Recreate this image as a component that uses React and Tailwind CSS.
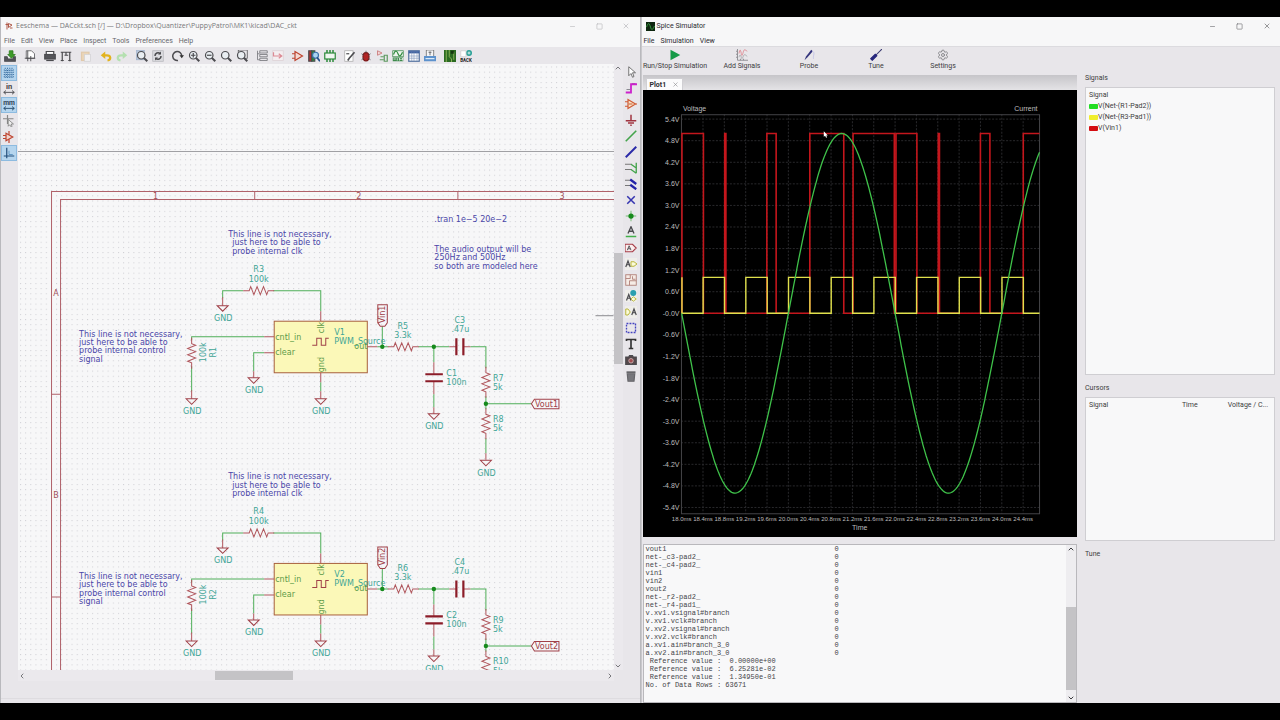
import { Minus, Square, X, Settings, ChevronUp, ChevronDown, ChevronLeft, ChevronRight } from 'lucide-react'

const WIRE = '#4fae58'
const PIN = '#b0565c'
const BODY = '#a04048'
const FIELD = '#3fa596'
const NOTE = '#4a46a8'

function Icon({ children }) {
  return (
    <svg viewBox="0 0 16 16" className="h-3 w-3 shrink-0" fill="none" stroke="#4b4b4f" strokeWidth="1.6">
      {children}
    </svg>
  )
}

const lens = (
  <>
    <circle cx="7" cy="7" r="5" fill="#e9eef2" />
    <path d="M10.5 10.5L15 15" strokeWidth="2.8" />
  </>
)

const topGroups = [
  [['Save', <><path d="M1 9h3l1 3h7l1-3h2v6H1z" fill="#55555a" /><path d="M7 1h5v5h3l-5 5-5-5h2z" fill="#3d9a28" stroke="#2c7a1c" strokeWidth="1" /></>]],
  [['Page settings', <><path d="M3 1h7l4 4v6H3z" fill="#fff" strokeWidth="1" /><path d="M5 1v14M1 11h14M9 8v7" strokeWidth="1.2" /></>]],
  [
    ['Print', <><path d="M3 6V2h10v4" fill="#fff" /><rect x="1" y="6" width="14" height="6" fill="#55555a" /><path d="M3 14h10" /></>],
    ['Plot', <><path d="M1 3h14M3 3v12M13 3v12M6 7h5M8 3v4" /><path d="M1 14h4M11 14h4" /></>],
  ],
  [['Paste', <g opacity=".45"><rect x="2" y="3" width="10" height="11" fill="#eec27c" stroke="#d9a861" /><rect x="6" y="6" width="8" height="9" fill="#fff" stroke="#bbb" strokeWidth="1" /></g>]],
  [
    ['Undo', <><path d="M5 7h4c6 0 6 6 1 7" stroke="#e2b31f" strokeWidth="3" /><path d="M7 2v10L1 7z" fill="#e2b31f" stroke="none" /></>],
    ['Redo', <><path d="M11 7H7c-6 0-6 6-1 7" stroke="#b4e0b0" strokeWidth="3" /><path d="M9 2v10l6-5z" fill="#b4e0b0" stroke="none" /></>],
  ],
  [
    ['Find', <><rect x="0" y="0" width="11" height="13" fill="#b8c7dc" stroke="#9fb0c8" strokeWidth="1" />{lens}</>],
    ['Find and replace', <><rect x="1" y="1" width="14" height="14" fill="#dcdce0" stroke="#b5b5bb" strokeWidth="1" /><path d="M4 8a4 4 0 0 1 7-3M12 8a4 4 0 0 1-7 3" strokeWidth="2" /><path d="M12 2v4H8zM4 14v-4h4z" fill="#4b4b4f" stroke="none" /></>],
  ],
  [
    ['Refresh', <><path d="M8 14a6 6 0 1 1 5-6" strokeWidth="2" /><path d="M10 7h6l-3 4z" fill="#333" stroke="none" /></>],
    ['Zoom in', <>{lens}<path d="M4 7h6M7 4v6" /></>],
    ['Zoom out', <>{lens}<path d="M4 7h6" /></>],
    ['Zoom to fit', lens],
    ['Zoom to selection', <><rect x="3" y="0" width="12" height="11" strokeWidth="1" />{lens}</>],
  ],
  [
    ['Hierarchy', <path d="M2 1v12h3M2 5h3M5 1h10v3H5zM5 6h10v3H5zM5 11h10v3H5z" strokeWidth="1.1" stroke="#77777c" />],
    ['Leave sheet', <><rect x="1" y="1" width="14" height="13" fill="#f4eef0" stroke="#dccfd4" strokeWidth="1" /><path d="M2 3v5h10M9 5l4 3-4 3" stroke="#dc8a94" /></>],
  ],
  [
    ['Symbol editor', <><path d="M4 2v12l10-6z" fill="#f4d9d2" stroke="#bd4430" /><path d="M0 5h4M0 11h4" stroke="#bd4430" /></>],
    ['Browse libraries', <><path d="M1 1h4v14H1z" fill="#b03030" /><path d="M5 1h4v14H5z" fill="#2c8a3c" /><circle cx="10" cy="7" r="4" fill="#a9d3ef" stroke="#3b6fa8" /><path d="M12 10l4 5" strokeWidth="2.4" stroke="#234f8a" /></>],
    ['Footprint editor', <><rect x="1" y="4" width="14" height="8" fill="#f0f6f0" stroke="#2d8a3b" /><path d="M4 0v4M8 0v4M12 0v4M4 12v4M8 12v4M12 12v4" stroke="#2d8a3b" strokeWidth="2" /></>],
  ],
  [
    ['Annotate', <><rect x="1" y="1" width="11" height="14" fill="#fff" stroke="#aaa" strokeWidth="1" /><path d="M14 3l-7 8-2 3" strokeWidth="2.2" /><path d="M3 5h4" /></>],
    ['Electrical rules', <><ellipse cx="8" cy="9" rx="4" ry="5.5" fill="#b02525" stroke="#7d1818" /><path d="M8 1v3M2 5l3 2M14 5l-3 2M2 13l3-2M14 13l-3-2" strokeWidth="1" /></>],
    ['Assign footprints', <><path d="M2 1v6l6-3z" fill="#f2d5d5" stroke="#c46b6b" strokeWidth="1" /><path d="M6 9h4M12 7h3v8h-4V7h1M5 13h5" stroke="#5d9a60" /></>],
    ['Simulator', <><rect x="1" y="1" width="14" height="8" fill="#eef4ee" stroke="#3e8a4c" strokeWidth="1" /><path d="M2 6c2-6 4-6 6-1s4 3 6-2" stroke="#2d8a3b" /><path d="M1 10h14v5H1z" fill="#3e8a4c" stroke="none" /><path d="M2 12h3M7 11v3M10 14v-3l2 2 2-2v3" stroke="#fff" strokeWidth="1" /></>],
    ['Symbol fields', <><rect x="1" y="1" width="14" height="14" fill="#fff" stroke="#51709e" /><path d="M1 3h14" stroke="#3f62a0" strokeWidth="3" /><path d="M1 8h14M1 11h14M5 3v12M8 3v12M12 3v12" stroke="#7d93b8" strokeWidth=".8" /></>],
    ['Bill of materials', <><rect x="3" y="0" width="10" height="9" fill="#f5f5f7" stroke="#666" strokeWidth="1" /><path d="M8 2v5M6 3h4" strokeWidth="1" /><rect x="0" y="8" width="16" height="7" fill="#5d92cd" stroke="none" /><path d="M2 11.5h12" stroke="#dbe9f7" /></>],
  ],
  [
    ['Board editor', <><rect x="0" y="0" width="16" height="16" fill="#2c6b22" stroke="none" /><path d="M3 0v16M7 0v9l3 3v4M13 3v10" stroke="#93b85c" strokeWidth="1.2" /><rect x="9" y="1" width="4" height="4" fill="#16380f" stroke="none" /></>],
    ['Back import', <><circle cx="12" cy="4" r="4" fill="#2aa197" stroke="none" /><path d="M12 2v4M10 4h4" stroke="#fff" strokeWidth="1" /><path d="M1 1h7v8H1z" fill="#fff" stroke="#ccc" strokeWidth="1" /><text x="8" y="16" textAnchor="middle" fontSize="6" fontWeight="700" fontFamily="Roboto, sans-serif" fill="#222" stroke="none">BACK</text></>],
  ],
]

const leftTools = [
  ['Grid', true, <path d="M3 1v14M6 1v14M9 1v14M12 1v14M1 4h14M1 7h14M1 10h14M1 13h14" stroke="#33699c" strokeDasharray="1.5 1.5" strokeWidth="1.3" />],
  ['Inches', false, <><text x="8" y="8" textAnchor="middle" fontSize="10" fontWeight="700" fontFamily="Roboto, sans-serif" fill="#444" stroke="none">in</text><path d="M1 12.5h14M4 10l-3 2.5 3 2.5M12 10l3 2.5-3 2.5" strokeWidth="1.2" /></>],
  ['Millimeters', true, <><text x="8" y="8" textAnchor="middle" fontSize="9" fontWeight="700" fontFamily="Roboto, sans-serif" fill="#345" stroke="none">mm</text><path d="M1 12.5h14M4 10l-3 2.5 3 2.5M12 10l3 2.5-3 2.5" stroke="#24496b" strokeWidth="1.2" /></>],
  ['Full cursor', false, <><path d="M6 0v12M0 5h14" stroke="#888" /><path d="M7 6v9l2-2 2 3 1-1-1-3h3z" fill="#eee" stroke="#777" strokeWidth="1" /></>],
  ['Hidden pins', false, <><path d="M4 3v10l9-5z" fill="#f2d3cc" stroke="#bd4430" /><path d="M0 6h4M0 10h4M8 0v5M8 11v5" stroke="#bd4430" /></>],
  ['Free angle wires', true, <><path d="M5 1v14M1 12h14" stroke="#234f7a" /><path d="M8 5v5h5" stroke="#4a86b8" strokeWidth="1" /></>],
]

const rightTools = [
  ['Select', <path d="M5 1v12l3-3 2 5 2-1-2-5h4z" fill="#fff" stroke="#666" strokeWidth="1.2" />],
  ['Highlight net', <><path d="M9 2h5M2 10h5" stroke="#8a8a90" /><path d="M1 14h7V3h8" stroke="#cc22cc" strokeWidth="2.4" /></>],
  ['Place symbol', <><path d="M4 2v12l10-6z" fill="#f7e3c5" stroke="#cf5a34" /><path d="M0 5h4M0 11h4M5 8h5M14 8h2" stroke="#cf5a34" /></>],
  ['Place power', <path d="M8 1v8M1 9h14M4 12h8M7 15h2" stroke="#a03440" strokeWidth="2" />],
  ['Wire', <path d="M1 15L15 1" stroke="#44a44c" strokeWidth="2.2" />],
  ['Bus', <path d="M1 15L15 1" stroke="#2a2aa8" strokeWidth="2.6" />],
  ['Wire entry', <><path d="M0 3h9M0 10h9" stroke="#777" /><path d="M8 3l7 5M8 10l7 5M15 1v14" stroke="#44a44c" strokeWidth="1.8" /></>],
  ['Bus entry', <><path d="M0 3h8M0 10h8" stroke="#777" /><path d="M7 2l8 6M7 9l8 6" stroke="#2424a8" strokeWidth="3" /></>],
  ['No connect', <path d="M3 3l10 10M13 3L3 13" stroke="#3434b0" strokeWidth="2" />],
  ['Junction', <><path d="M8 1v14M1 8h14" stroke="#6cb86c" strokeWidth="1.2" /><circle cx="8" cy="8" r="3.5" fill="#178a1c" stroke="none" /></>],
  ['Net label', <><path d="M4 10L8 1l4 9M5.5 7h5" strokeWidth="1.8" /><path d="M1 14h14" stroke="#44b04c" strokeWidth="2" /></>],
  ['Global label', <><path d="M0 3h10l5 5-5 5H0z" fill="#fbeeee" stroke="#a63c48" /><path d="M3 11l2.5-6L8 11M4 9h3" strokeWidth="1.2" /></>],
  ['Hierarchical label', <><rect width="16" height="16" fill="#efeeea" stroke="none" /><path d="M1 12l3-8 3 8M2 9h4" /><path d="M8 5h4l4 3-4 3H8z" fill="#fbfbd8" stroke="#b8b43a" strokeWidth="1.3" /></>],
  ['Add sheet', <><rect x="1" y="1" width="14" height="14" fill="#f6ece6" stroke="#b08078" strokeWidth="1.2" /><path d="M1 6h6V1M6 15V9h9M10 3v4h4" stroke="#b08078" strokeWidth="1.2" /></>],
  ['Import sheet pin', <><rect width="16" height="16" fill="#efeeea" stroke="none" /><circle cx="11" cy="4" r="4" fill="#2a9fb0" stroke="none" /><path d="M2 14l3-8 3 8M3 11h4" /><path d="M8 12l3-3 4 3-4 3z" fill="#fbfbd8" stroke="#b8b43a" strokeWidth="1.2" /></>],
  ['Sheet pin', <><rect width="16" height="16" fill="#efeeea" stroke="none" /><path d="M1 4h3l3 4-3 4H1z" fill="#fbfbd8" stroke="#b8b43a" strokeWidth="1.3" /><path d="M9 12l3-8 3 8M10 9h4" /></>],
  ['Graphic lines', <rect x="2" y="2" width="12" height="12" stroke="#4444c0" strokeDasharray="2.5 1.5" strokeWidth="1.8" />],
  ['Text', <path d="M2 4V2h12v2M8 2v12M5 14h6" stroke="#333" strokeWidth="2.2" />],
  ['Image', <><path d="M1 4h4l1-2h4l1 2h4v10H1z" fill="#55474a" /><circle cx="8" cy="9" r="3" fill="#a04c50" stroke="#cfc0c0" strokeWidth="1" /></>],
  ['Delete', <><path d="M3 5l1 10h8l1-10z" fill="#77777c" stroke="#66666a" /><path d="M2 3h12" stroke="#66666a" strokeWidth="2.5" /></>],
]

function WindowButtons({ className }) {
  const btn = 'flex h-full w-[27px] items-center justify-center'
  return (
    <div className={`ml-auto flex h-full ${className}`}>
      <button aria-label="Minimize" className={btn}><Minus size={7} /></button>
      <button aria-label="Maximize" className={btn}><Square size={7} /></button>
      <button aria-label="Close" className={btn}><X size={8} /></button>
    </div>
  )
}

function Gnd({ x, y }) {
  return (
    <>
      <path d={`M${x - 5.5} ${y}h11l-5.5 5.5z`} stroke={BODY} fill="none" />
      <text x={x + 0.5} y={y + 15.5} textAnchor="middle" fill={FIELD}>GND</text>
    </>
  )
}

// zig-zag resistor centred on x,y
function Resistor({ x, y, vertical }) {
  return (
    <path
      transform={`translate(${x} ${y})${vertical ? ' rotate(90)' : ''}`}
      d="M-15.5 0h6l1.5-4 3.2 8 3.2-8 3.2 8 3.2-8 3.2 8 1.5-4h6"
      stroke={PIN}
      fill="none"
    />
  )
}

// a leading ">" indents the line
function Lines({ x, y, lines }) {
  return lines.map((l, i) => (
    <text key={i} x={x + (l[0] === '>' ? 4 : 0)} y={y + i * 8.3} fill={NOTE}>{l.replace('>', '')}</text>
  ))
}

function Channel({ dy, names }) {
  const { r1, rclk, v, vin, rs, cs, cp, ra, rb, vout } = names
  return (
    <g transform={`translate(0 ${dy})`}>
      <Lines x={228} y={237} lines={['This line is not necessary,', '>just here to be able to', '>probe internal clk']} />
      <Lines x={79} y={336.5} lines={['This line is not necessary,', 'just here to be able to', 'probe internal control', 'signal']} />

      <g fill="none" stroke={WIRE}>
        <path d="M243 290.5H222.5V298M273 290.5H320.5V311" />
        <path d="M264 336.5H191.5V340M191.5 366V391" />
        <path d="M264 352.5H253.5V371M320.5 382V391" />
        <path d="M377 346.5H388M418 346.5H449M382 346.5V326" />
        <path d="M433.5 346.5V362M433.5 394V407M470 346.5H485.5V368M485.5 396V409M485.5 438V453M485.5 403.5H531" />
      </g>
      <g fill="none" stroke={PIN}>
        <path d="M222.5 297V305.5M320.5 311V321M191.5 390V398.5M253.5 371V377.5M320.5 372V382M320.5 391V398.5" />
        <path d="M264 336.5h10M264 352.5h10M367 346.5h10M449 346.5h7M463 346.5h7" />
        <path d="M433.5 362v12M433.5 381v13M433.5 407v6.5M485.5 453v6.5" />
      </g>

      <rect x="274" y="321" width="93" height="51.5" fill="#fbf8b8" stroke="#a8603c" />
      <path d="M312 345h4.5v-7h4.500v7h4.500v-7h3" fill="none" stroke={BODY} />
      <g fill="#5b9a48">
        <text x="275" y="339.5">cntl_in</text>
        <text x="275" y="355">clear</text>
        <text x="354" y="349">out</text>
        <text transform="translate(323.5 333) rotate(-90)">clk</text>
        <text transform="translate(323.5 372) rotate(-90)">gnd</text>
      </g>

      <Resistor x={258.5} y={290.5} />
      <Resistor x={403} y={346.5} />
      <Resistor x={191.5} y={353} vertical />
      <Resistor x={485.5} y={382} vertical />
      <Resistor x={485.5} y={423.5} vertical />

      <Gnd x={222.5} y={305.5} />
      <Gnd x={191.5} y={398.5} />
      <Gnd x={253.5} y={377.5} />
      <Gnd x={320.5} y={398.5} />
      <Gnd x={433.5} y={413.5} />
      <Gnd x={485.5} y={460} />

      <path d="M456 338v17M463 338v17M425 374h17.5M425 381h17.5" stroke="#8c1c28" strokeWidth="2.2" />
      <g fill="#168a1c">
        <circle cx="382" cy="346.5" r="2.2" />
        <circle cx="433.5" cy="346.5" r="2.2" />
        <circle cx="485.5" cy="403.5" r="2.2" />
      </g>

      <g fill={FIELD}>
        <g textAnchor="middle">
          <text x="258.5" y="272">{rclk}</text>
          <text x="258.5" y="281.5">100k</text>
          <text x="402.5" y="328.5">{rs}</text>
          <text x="402.5" y="338">3.3k</text>
          <text x="459.5" y="323">{cs}</text>
          <text x="460" y="332">.47u</text>
          <text transform="translate(206 352) rotate(-90)">100k</text>
          <text transform="translate(215.5 352) rotate(-90)">{r1}</text>
        </g>
        <text x="334" y="335">{v}</text>
        <text x="334" y="344">PWM_Source</text>
        <text x="446" y="375.5">{cp}</text>
        <text x="446" y="384.5">100n</text>
        <text x="492.5" y="380.5">{ra}</text>
        <text x="492.5" y="390">5k</text>
        <text x="492.5" y="421.5">{rb}</text>
        <text x="492.5" y="431">5k</text>
      </g>

      <g fill="none" stroke={BODY}>
        <path d="M377.5 304.5h9.5v18l-2.5 3.5h-4.5l-2.5-3.5z" />
        <path d="M531 403.5l3-4.5h24.5v9.5H534z" />
      </g>
      <g fill={BODY}>
        <text transform="translate(385 323) rotate(-90)">{vin}</text>
        <text x="534.5" y="406.5">{vout}</text>
      </g>
    </g>
  )
}

function Schematic() {
  return (
    <svg viewBox="18 64 595 606" preserveAspectRatio="xMinYMin slice" className="block h-full w-full bg-[#f7f7f8]" fontSize="8" fontFamily="'DejaVu Sans', sans-serif">
      <defs>
        <pattern id="dots" x="20" y="66.5" width="5.15" height="5.15" patternUnits="userSpaceOnUse">
          <rect width="1" height="1" fill="#cfcfd4" />
        </pattern>
      </defs>
      <rect x="18" y="64" width="900" height="900" fill="url(#dots)" />
      <path d="M18 151.5H1000" stroke="#a0a0a4" />
      <path d="M595 315.5h18" stroke="#8a8a8e" />

      <g fill="none" stroke="#b0626a">
        <path d="M1000 191.5H51.5V1000M1000 199.5H60.5V1000" />
        <path d="M254.5 191.5v8M457.5 191.5v8M51.5 394h9M51.5 596.5h9" />
      </g>
      <g fill="#a2505a" textAnchor="middle">
        <text x="155.5" y="198.5">1</text>
        <text x="358.5" y="198.5">2</text>
        <text x="561.5" y="198.5">3</text>
        <text x="56" y="296">A</text>
        <text x="56" y="498">B</text>
      </g>

      <text x="434" y="222" fill={NOTE}>.tran 1e−5 20e−2</text>
      <Lines x={434} y={252} lines={['The audio output will be', '250Hz and 500Hz', 'so both are modeled here']} />

      <Channel dy={0} names={{ r1: 'R1', rclk: 'R3', v: 'V1', vin: 'Vin1', rs: 'R5', cs: 'C3', cp: 'C1', ra: 'R7', rb: 'R8', vout: 'Vout1' }} />
      <Channel dy={242} names={{ r1: 'R2', rclk: 'R4', v: 'V2', vin: 'Vin2', rs: 'R6', cs: 'C4', cp: 'C2', ra: 'R9', rb: 'R10', vout: 'Vout2' }} />
    </svg>
  )
}

function Eeschema() {
  return (
    <section className="flex min-w-0 flex-1 flex-col border-x border-[#b9b9bd] bg-[#e8e6ea] text-[#77777b]">
      <header className="flex h-[18px] items-center bg-[#f7f7f8] pl-1">
        <svg viewBox="0 0 16 16" className="mr-[3px] h-2 w-2" fill="none" stroke="#b05a4a" strokeWidth="2">
          <path d="M1 5h6M4 1v14M7 3l7 3-7 5zM10 12h5" />
        </svg>
        <h1 className="whitespace-nowrap font-['Open_Sans',sans-serif]">Eeschema — DACckt.sch [/] — D:\Dropbox\Quantizer\PuppyPatrol\MK1\kicad\DAC_ckt</h1>
        <WindowButtons className="text-[#b5b5b9]" />
      </header>
      <nav className="flex h-3 items-center gap-[6px] bg-[#f7f7f8] pl-[3px] text-[#66666a]">
        {['File', 'Edit', 'View', 'Place', 'Inspect', 'Tools', 'Preferences', 'Help'].map((m) => (
          <button key={m}>{m}</button>
        ))}
      </nav>
      <div className="flex h-[17px] items-center gap-1 pl-px">
        {topGroups.map((group, i) => (
          <div key={i} className="flex items-center">
            {group.map(([name, art]) => (
              <button key={name} aria-label={name} className="flex h-4 w-4 items-center justify-center">
                <Icon>{art}</Icon>
              </button>
            ))}
          </div>
        ))}
      </div>

      <div className="flex min-h-0 flex-1">
        <div className="flex w-[17px] flex-col pt-px">
          {leftTools.map(([name, on, art]) => (
            <button
              key={name}
              aria-label={name}
              aria-pressed={on}
              className={`flex h-4 w-4 items-center justify-center ${on ? 'border border-[#8dbbe0] bg-[#b5d5ee]' : ''}`}
            >
              <Icon>{art}</Icon>
            </button>
          ))}
        </div>
        <div className="grid min-w-0 flex-1 grid-cols-[1fr_9px] grid-rows-[1fr_11px]">
          <div className="min-h-0 min-w-0 overflow-hidden"><Schematic /></div>
          <div className="flex flex-col items-center bg-[#ebe9ed]">
            <button aria-label="Scroll up"><ChevronUp size={8} strokeWidth={3} /></button>
            <div className="flex w-full flex-1 flex-col">
              <div className="flex-[181]" />
              <div className="flex-[111] bg-[#c4c3c6]" />
              <div className="flex-[298]" />
            </div>
            <button aria-label="Scroll down"><ChevronDown size={8} strokeWidth={3} /></button>
          </div>
          <div className="flex items-center justify-between bg-[#ebe9ed]">
            <button aria-label="Scroll left"><ChevronLeft size={8} strokeWidth={3} /></button>
            <div className="flex h-[9px] w-full">
              <div className="flex-[189]" />
              <div className="flex-[78] bg-[#c4c3c6]" />
              <div className="flex-[312]" />
            </div>
            <button aria-label="Scroll right"><ChevronRight size={8} strokeWidth={3} /></button>
          </div>
        </div>
        <div className="flex w-[17px] flex-col items-center">
          {rightTools.map(([name, art]) => (
            <button key={name} aria-label={name} className="flex h-4 w-4 items-center justify-center">
              <Icon>{art}</Icon>
            </button>
          ))}
        </div>
      </div>
      <footer className="flex h-[22px] flex-col justify-end pb-1">
        <div className="border-t border-[#dedce0]" />
      </footer>
    </section>
  )
}

// plot axes: time in ms, voltage in V
const px = (t) => 680.7 + (t - 18) * 53.42
const py = (v) => 313.3 - v * 36
const xTicks = Array.from({ length: 17 }, (_, i) => 18 + i * 0.4)
const yTicks = Array.from({ length: 19 }, (_, i) => 5.4 - i * 0.6)

let sine = ''
for (let i = 0; i <= 300; i++) {
  const t = 18 + (i / 300) * 6.707
  sine += `${i ? 'L' : 'M'}${px(t).toFixed(1)} ${py(-5 * Math.sin(((t - 18) * Math.PI) / 2)).toFixed(1)}`
}

function pulses(edges, high) {
  return edges.reduce((d, [up, down]) => `${d}H${up}V${py(high)}H${down}V${py(0)}`, `M681 ${py(0)}`)
}
const pwm = pulses([[681, 702.5], [723.8, 725], [766, 775.3], [809, 843], [852.3, 893.6], [895.3, 916.2], [937.6, 938.8], [979.8, 989.3]], 5) + `H1022.7V${py(5)}H1039`
const clock = pulses([[681, 681], ...Array.from({ length: 8 }, (_, i) => [702.2 + i * 42.74, 723.6 + i * 42.74])], 1) + 'H1039'

function Plot() {
  return (
    <svg viewBox="642 90 435 447" className="block h-full w-full bg-black" fontSize="7" fontFamily="'Liberation Sans', Arial, sans-serif" fill="#bdbdbd">
      <g stroke="#29292c" strokeDasharray="2 1.5" fill="none">
        {xTicks.slice(1).map((t) => <path key={t} d={`M${px(t)} 114V514`} />)}
        {yTicks.map((v) => <path key={v} d={`M680 ${py(v)}H1039`} />)}
      </g>
      <rect x="680.5" y="114.5" width="358.5" height="399.5" fill="none" stroke="#444448" />
      <path d={pwm} fill="none" stroke="#c4161c" strokeWidth="1.6" />
      <path d={clock} fill="none" stroke="#e0e04c" strokeWidth="1.4" />
      <path d={sine} fill="none" stroke="#3fc24a" strokeWidth="1.3" />
      <path d="M823 131v5.5l1.3-1 1 2 1-.5-.9-1.8h1.6z" fill="#fff" />

      <text x="682" y="110.5">Voltage</text>
      <text x="1037" y="110.5" textAnchor="end">Current</text>
      <text x="859" y="530" textAnchor="middle">Time</text>
      {yTicks.map((v, i) => (
        <text key={v} x="678.5" y={py(v) + 2.5} textAnchor="end">{i === 9 ? '-0.0' : v.toFixed(1)}V</text>
      ))}
      {xTicks.map((t) => (
        <text key={t} x={px(t)} y="521.5" fontSize="6" textAnchor="middle">{t.toFixed(1)}ms</text>
      ))}
    </svg>
  )
}

const simTools = [
  ['Run/Stop Simulation', <path d="M2 1v14l13-7z" fill="#169a48" stroke="none" />],
  ['Add Signals', <><path d="M2 0v15h14M2 3H0M2 7H0M2 11H0M6 15v-2M10 15v-2" stroke="#8a8a90" strokeWidth="1.2" /><path d="M4 6c1-6 2-6 3 0s2 0 3-3 2-2 5 0" stroke="#dc8088" strokeWidth="1.1" /><path d="M4 11c1-4 2-4 3 0s2 0 3-2 2-2 5 1" stroke="#a0a0a4" strokeWidth="1.1" /></>],
  ['Probe', <><path d="M2 15l2-5 7-9 2 2-7 8z" fill="#34347c" stroke="none" /><path d="M12 3c5 1 1 6 2 10" stroke="#b9b9e4" strokeWidth="1" /></>],
  ['Tune', <><path d="M8 8l8-8" stroke="#34346c" strokeWidth="1.4" /><path d="M1 13l6-6 2 2-6 6z" fill="#26267c" stroke="#26267c" /></>],
]

const signals = [
  ['V(Net-(R1-Pad2))', 'bg-[#22dd22]'],
  ['V(Net-(R3-Pad1))', 'bg-[#f0ee2c]'],
  ['V(Vin1)', 'bg-[#d40c10]'],
]

const vectors = [
  'vout1', 'net-_c3-pad2_', 'net-_c4-pad2_', 'vin1', 'vin2', 'vout2', 'net-_r2-pad2_', 'net-_r4-pad1_',
  'v.xv1.vsignal#branch', 'v.xv1.vclk#branch', 'v.xv2.vsignal#branch', 'v.xv2.vclk#branch',
  'a.xv1.ain#branch_3_0', 'a.xv2.ain#branch_3_0',
]
const consoleText = [
  ...vectors.map((v) => v.padEnd(45) + '0'),
  ' Reference value :  0.00000e+00',
  ' Reference value :  6.25281e-02',
  ' Reference value :  1.34950e-01',
  'No. of Data Rows : 63671',
].join('\n')

function Simulator() {
  return (
    <section className="flex min-w-0 flex-1 flex-col border-l border-[#c9c8cc] bg-[#e8e6ea] text-[#3c3c40]">
      <header className="flex h-[18px] items-center bg-[#f7f7f8] pl-1">
        <svg viewBox="0 0 16 16" className="mr-[2px] h-[9px] w-[9px] bg-[#0d260f]" fill="none" stroke="#3faa48" strokeWidth="1.5">
          <path d="M1 9c3-9 5-7 7 0s4 5 7-2" />
        </svg>
        <h2 className="text-[#2c2c30]">Spice Simulator</h2>
        <WindowButtons className="text-[#66666a]" />
      </header>
      <nav className="flex h-3 items-center gap-[6px] border-b border-[#dcdbdf] bg-[#f7f7f8] pl-[2px] text-[#2c2c30]">
        {['File', 'Simulation', 'View'].map((m) => (
          <button key={m}>{m}</button>
        ))}
      </nav>

      <div className="flex h-7 pt-[2px]">
        {simTools.map(([name, art]) => (
          <button key={name} className="flex w-[67px] flex-col items-center whitespace-nowrap">
            <Icon>{art}</Icon>
            <span className="leading-[10px]">{name}</span>
          </button>
        ))}
        <button className="flex w-[67px] flex-col items-center">
          <Settings size={12} className="text-[#8a8a8e]" />
          <span className="leading-[10px]">Settings</span>
        </button>
      </div>

      <div className="flex min-h-0 flex-1 pl-px">
        <div className="flex min-w-0 flex-1 flex-col">
          <div className="flex h-[15px] items-end bg-linear-to-b from-[#c6c5c9] to-[#e4e3e6] pl-[3px]">
            <button className="flex h-3 items-center gap-[6px] border border-b-0 border-[#d0cfd3] bg-[#fbfbfc] px-[3px] font-bold text-[#2c2c30]">
              Plot1 <X size={7} className="text-[#88888c]" />
            </button>
          </div>
          <div className="min-h-0 flex-1 bg-black"><Plot /></div>
          <div className="mt-[7px] flex h-[159px] border border-[#b9b8bc] bg-[#f8f8f9]">
            <pre className="flex-1 overflow-hidden pl-[2px] font-['Liberation_Mono',monospace] text-[7px] leading-2 text-[#444448]">{consoleText}</pre>
            <div className="flex w-[10px] flex-col items-center bg-[#eeedf0]">
              <button aria-label="Scroll up"><ChevronUp size={8} strokeWidth={3} /></button>
              <div className="flex w-full flex-1 flex-col">
                <div className="flex-[54]" />
                <div className="flex-[83] bg-[#c4c3c6]" />
                <div className="flex-[4]" />
              </div>
              <button aria-label="Scroll down"><ChevronDown size={8} strokeWidth={3} /></button>
            </div>
          </div>
        </div>

        <aside className="flex w-[203px] flex-col pr-[5px] pl-2">
          <h3 className="h-3 leading-[6px]">Signals</h3>
          <div className="flex-[289] border border-[#cfced2] bg-[#f8f8f9]">
            <table className="w-full">
              <thead>
                <tr><th className="h-[13px] pl-[3px] text-left font-normal">Signal</th></tr>
              </thead>
              <tbody>
                {signals.map(([name, color]) => (
                  <tr key={name}>
                    <td className="h-[11px] pl-[3px]">
                      <span className="flex items-center leading-none">
                        <span className={`h-[5px] w-[9px] rounded-[1px] ${color}`} />
                        {name}
                      </span>
                    </td>
                  </tr>
                ))}
              </tbody>
            </table>
          </div>
          <h3 className="mt-2 h-[14px] leading-[10px]">Cursors</h3>
          <div className="flex-[143] border border-[#cfced2] bg-[#f8f8f9]">
            <table className="w-full">
              <thead>
                <tr className="text-left">
                  <th className="h-[13px] w-[51%] pl-[3px] font-normal">Signal</th>
                  <th className="font-normal">Time</th>
                  <th className="pr-[6px] text-right font-normal">Voltage / C...</th>
                </tr>
              </thead>
            </table>
          </div>
          <h3 className="mt-2 h-[154px] leading-[10px]">Tune</h3>
        </aside>
      </div>
    </section>
  )
}

export default function App() {
  return (
    <main className="flex h-screen bg-black py-[17px] font-['Roboto',sans-serif] text-[7px] leading-2">
      <Eeschema />
      <Simulator />
    </main>
  )
}
